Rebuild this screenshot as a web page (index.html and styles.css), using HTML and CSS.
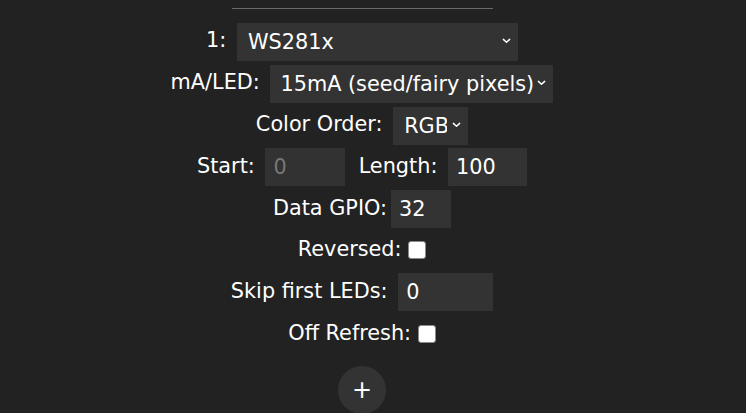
FILE: index.html
```html
<!DOCTYPE html>
<html>
<head>
<meta charset="utf-8">
<link rel="stylesheet" href="styles.css">
</head>
<body>
<div class="page">
  <hr class="sep">
  <div class="row">1: <span class="sel w-type"><select class="dd"><option>WS281x</option></select><svg class="chev" viewBox="0 0 10 6" width="9" height="6"><path d="M1.5 1.2 L5 4.5 L8.5 1.2" fill="none" stroke="#fff" stroke-width="1.6" stroke-linecap="round" stroke-linejoin="round"/></svg></span></div>
  <div class="row">mA/LED: <span class="sel"><select class="dd auto"><option>15mA (seed/fairy pixels)</option></select><svg class="chev" viewBox="0 0 10 6" width="9" height="6"><path d="M1.5 1.2 L5 4.5 L8.5 1.2" fill="none" stroke="#fff" stroke-width="1.6" stroke-linecap="round" stroke-linejoin="round"/></svg></span></div>
  <div class="row">Color Order: <span class="sel w-co"><select class="dd"><option>RGB</option></select><svg class="chev" viewBox="0 0 10 6" width="9" height="6"><path d="M1.5 1.2 L5 4.5 L8.5 1.2" fill="none" stroke="#fff" stroke-width="1.6" stroke-linecap="round" stroke-linejoin="round"/></svg></span></div>
  <div class="row">Start: <input class="tf w-start" value="0" disabled> &nbsp;Length: <input class="tf w-len" value="100"></div>
  <div class="row">Data GPIO:<input class="tf w-gpio" value="32"></div>
  <div class="row">Reversed: <input type="checkbox" class="cb"></div>
  <div class="row">Skip first LEDs: <input class="tf w-skip" value="0"></div>
  <div class="row">Off Refresh: <input type="checkbox" class="cb"></div>
  <div class="btnrow"><button class="plus">+</button></div>
</div>
</body>
</html>
```
FILE: styles.css
```css
html, body {
  margin: 0;
  padding: 0;
  background: #222222;
}
body {
  font-family: "DejaVu Sans", Verdana, sans-serif;
  font-size: 20.8px;
  color: #fff;
  overflow: hidden;
}
.page {
  width: 724px;
  text-align: center;
}
.sep {
  width: 261px;
  margin: 8px auto 0;
  border: 0;
  border-top: 1px solid #6a6a6a;
  height: 0;
}
.row {
  line-height: 41.9px;
  height: 41.9px;
  white-space: nowrap;
}
.sep + .row {
  margin-top: 11px;
}
.sel {
  position: relative;
  display: inline-block;
  vertical-align: middle;
  height: 38px;
  margin-left: 4px;
}
.dd {
  appearance: none;
  -webkit-appearance: none;
  font-family: inherit;
  font-size: 20.8px;
  color: #fff;
  background: #333;
  border: 0;
  border-radius: 0;
  height: 38px;
  width: 100%;
  padding: 0 21px 0 11px;
  margin: 0;
  text-align: left;
  outline: none;
}
.dd.auto {
  width: auto;
  padding: 0 19px 0 10px;
}
.chev {
  position: absolute;
  right: 7px;
  top: 16px;
}
.w-type { width: 281px; }
.w-co { width: 75px; }
.tf {
  font-family: inherit;
  font-size: 20.8px;
  color: #fff;
  background: #333;
  border: 0;
  border-radius: 0;
  height: 38px;
  box-sizing: border-box;
  padding: 0 8px;
  margin: 0 0 0 4px;
  vertical-align: middle;
  outline: none;
}
.tf:disabled {
  color: #777;
  background: #323232;
}
.w-start { width: 80px; }
.w-len { width: 79px; }
.w-gpio { width: 60px; }
.w-skip { width: 95px; }
.cb {
  appearance: none;
  -webkit-appearance: none;
  width: 18px;
  height: 18px;
  box-sizing: border-box;
  background: #fff;
  border: 1px solid #8a8a8a;
  border-radius: 3px;
  margin: 0;
  vertical-align: middle;
}
.btnrow {
  padding-top: 11px;
}
.plus {
  width: 48px;
  height: 48px;
  border-radius: 50%;
  border: 0;
  background: #333;
  color: #fff;
  font-family: inherit;
  font-size: 24px;
  line-height: 48px;
  padding: 0;
}
```
